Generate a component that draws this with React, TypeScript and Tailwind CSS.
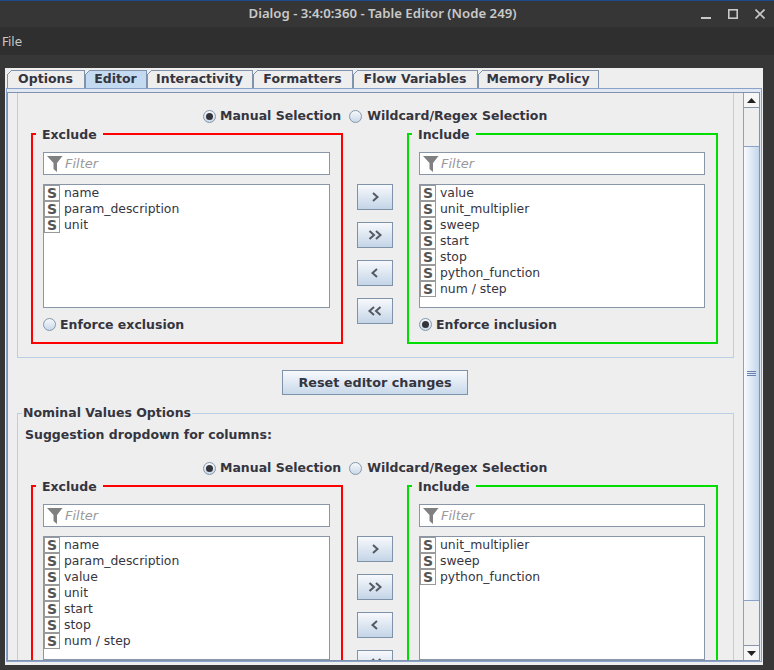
import React from 'react';

const bold = "font-['DejaVu_Sans',sans-serif] font-bold text-[12.5px] text-[#35353f]";

const tabs = [
  { name: 'Options', width: 'w-[78px]' },
  { name: 'Editor', width: 'w-[62px]', active: true },
  { name: 'Interactivity', width: 'w-[106px]' },
  { name: 'Formatters', width: 'w-[100px]' },
  { name: 'Flow Variables', width: 'w-[125px]' },
  { name: 'Memory Policy', width: 'w-[121px]' },
];

const Radio = ({ checked = false }: { checked?: boolean }) => (
  <span className="w-[13px] h-[13px] shrink-0 rounded-full border border-[#8397ac] bg-linear-to-b from-[#f6f8fb] to-[#c9d8e8] flex items-center justify-center">
    {checked && <span className="w-[7px] h-[7px] rounded-full bg-[#33333a]" />}
  </span>
);

const Funnel = () => (
  <svg width="16" height="18" viewBox="0 0 16 18" className="shrink-0">
    <path d="M0 1 H15.5 L10 8 V17 L6.5 14 V8 Z" fill="#808080" />
  </svg>
);

const FilterBox = ({ width }: { width: string }) => (
  <div className={`${width} h-[23px] bg-white border border-[#8896a8] flex items-center pl-[3px] gap-[2px]`}>
    <Funnel />
    <span className="font-['DejaVu_Sans',sans-serif] italic text-[13px] text-[#999999]">Filter</span>
  </div>
);

const ColumnList = ({ items, width }: { items: string[]; width: string }) => (
  <div className={`${width} h-[124px] bg-white border border-[#8896a8]`}>
    {items.map((item) => (
      <div key={item} className="h-[16px] flex items-center">
        <span className="w-[16px] h-[16px] shrink-0 border border-[#9a9a9a] flex items-center justify-center font-['DejaVu_Sans',sans-serif] font-bold text-[14px] text-[#555555]">
          S
        </span>
        <span className="ml-[4px] font-['DejaVu_Sans',sans-serif] text-[12.4px] text-[#35353f] whitespace-nowrap">{item}</span>
      </div>
    ))}
  </div>
);

const ColumnBox = ({
  title,
  color,
  items,
  enforce,
  checked,
  outer,
  inner,
}: {
  title: string;
  color: string;
  items: string[];
  enforce?: string;
  checked?: boolean;
  outer: string;
  inner: string;
}) => (
  <fieldset className={`${outer} h-[218px] border-2 ${color} pl-[10px] shrink-0`}>
    <legend className={`-ml-[7px] px-[6px] h-[16px] leading-[18px] ${bold}`}>{title}</legend>
    <div className="mt-[10px]">
      <FilterBox width={inner} />
    </div>
    <div className="mt-[9px]">
      <ColumnList items={items} width={inner} />
    </div>
    {enforce && (
      <div className="mt-[8px] h-[16px] flex items-center gap-[4px]">
        <Radio checked={checked} />
        <span className={`pt-[2px] ${bold}`}>{enforce}</span>
      </div>
    )}
  </fieldset>
);

const Chevrons = ({ dir, double }: { dir: 'left' | 'right'; double?: boolean }) => {
  const paths =
    dir === 'right'
      ? double
        ? ['M2.5 3 L7 7 L2.5 11', 'M9 3 L13.5 7 L9 11']
        : ['M6 3 L10.5 7 L6 11']
      : double
        ? ['M7 3 L2.5 7 L7 11', 'M13.5 3 L9 7 L13.5 11']
        : ['M10 3 L5.5 7 L10 11'];
  return (
    <svg width="16" height="14" viewBox="0 0 16 14" fill="none" stroke="#555a62" strokeWidth="2">
      {paths.map((d) => (
        <path key={d} d={d} />
      ))}
    </svg>
  );
};

const MoveButton = ({ dir, double }: { dir: 'left' | 'right'; double?: boolean }) => (
  <button className="w-[36px] h-[26px] border border-[#7e93aa] bg-linear-to-b from-[#f7f9fc] to-[#c4d5e7] flex items-center justify-center">
    <Chevrons dir={dir} double={double} />
  </button>
);

const SelectionRow = () => (
  <div className="h-[16px] flex items-center pl-[185px]">
    <Radio checked />
    <span className={`ml-[4px] ${bold}`}>Manual Selection</span>
    <span className="ml-[8px]">
      <Radio />
    </span>
    <span className={`ml-[5px] ${bold}`}>Wildcard/Regex Selection</span>
  </div>
);

const ColumnFilter = ({
  exclude,
  include,
  enforce,
  checkInclude,
}: {
  exclude: string[];
  include: string[];
  enforce?: boolean;
  checkInclude?: boolean;
}) => (
  <div className="flex items-start ml-[13px] mt-[2px]">
    <ColumnBox
      title="Exclude"
      color="border-[#ff0000]"
      items={exclude}
      enforce={enforce ? 'Enforce exclusion' : undefined}
      outer="w-[312px]"
      inner="w-[287px]"
    />
    <div className="w-[64px] shrink-0 flex flex-col items-center gap-[12px] mt-[58px]">
      <MoveButton dir="right" />
      <MoveButton dir="right" double />
      <MoveButton dir="left" />
      <MoveButton dir="left" double />
    </div>
    <ColumnBox
      title="Include"
      color="border-[#00dd00]"
      items={include}
      enforce={enforce ? 'Enforce inclusion' : undefined}
      checked={checkInclude}
      outer="w-[311px]"
      inner="w-[286px]"
    />
  </div>
);

const Scrollbar = () => (
  <div className="w-[16px] shrink-0 flex flex-col bg-[#eeeeee] border-l border-[#8aa2c8]">
    <div className="h-[15px] shrink-0 border-b border-[#8896a8] bg-[#f6f6f6] flex items-center justify-center">
      <svg width="9" height="5" viewBox="0 0 9 5"><path d="M0 5 L4.5 0 L9 5 Z" fill="#222222" /></svg>
    </div>
    <div className="h-[38px] shrink-0" />
    <div className="flex-1 border-y border-[#8aa2c8] bg-linear-to-r from-[#f8fbfe] to-[#c3d6e9] flex flex-col items-center justify-center gap-[1px]">
      <span className="w-[9px] h-[1px] bg-[#6a80b0]" />
      <span className="w-[9px] h-[1px] bg-[#6a80b0]" />
      <span className="w-[9px] h-[1px] bg-[#6a80b0]" />
    </div>
    <div className="h-[44px] shrink-0" />
    <div className="h-[15px] shrink-0 border-t border-[#8896a8] bg-[#f6f6f6] flex items-center justify-center">
      <svg width="9" height="5" viewBox="0 0 9 5"><path d="M0 0 L4.5 5 L9 0 Z" fill="#222222" /></svg>
    </div>
  </div>
);

export default function App() {
  return (
    <div className="w-[774px] h-[670px] overflow-hidden flex flex-col bg-[#373737]">
      {/* title bar */}
      <div className="h-[27px] shrink-0 border-t border-[#1c4a8c] bg-[#363636] flex items-center">
        <div className="flex-1" />
        <span className="font-['Noto_Sans',sans-serif] font-semibold text-[13.2px] text-[#c9c9c9] whitespace-nowrap">
          Dialog - 3:4:0:360 - Table Editor (Node 249)
        </span>
        <div className="flex-1 flex justify-end items-center gap-[17px] pr-[9px]">
          <svg width="10" height="10" viewBox="0 0 10 10"><rect x="0" y="8" width="10" height="2" fill="#c9c9c9" /></svg>
          <svg width="10" height="10" viewBox="0 0 10 10" fill="none" stroke="#c9c9c9" strokeWidth="1.6"><rect x="0.8" y="0.8" width="8.4" height="8.4" /></svg>
          <svg width="10" height="10" viewBox="0 0 10 10" fill="none" stroke="#c9c9c9" strokeWidth="1.6"><path d="M0.5 0.5 L9.5 9.5 M9.5 0.5 L0.5 9.5" /></svg>
        </div>
      </div>

      {/* menu bar */}
      <div className="h-[28px] shrink-0 bg-[#2f2f2f] flex items-center pl-[2px] pt-[1px]">
        <span className="font-['DejaVu_Sans',sans-serif] text-[12px] text-[#c9c9c9]">File</span>
      </div>

      {/* dialog */}
      <div className="w-[758px] h-[597px] mt-[13px] ml-[5px] bg-[#eeeeee] flex flex-col pt-[2px]">
        <div className="h-[18px] shrink-0 flex pl-[2px]">
          {tabs.map((tab) => (
            <div
              key={tab.name}
              className={`${tab.width} relative shrink-0 border border-b-0 border-[#8093ad] flex items-center justify-center pr-[1px] ${bold} ${
                tab.active ? 'bg-[#c4daf0]' : 'bg-[#eeeeee]'
              }`}
            >
              <svg width="5" height="5" viewBox="0 0 5 5" className="absolute -left-[1px] -top-[1px]">
                <path d="M0 0 H5 L0 5 Z" fill="#eeeeee" />
                <path d="M5 0 L0 5" stroke="#8093ad" strokeWidth="1" />
              </svg>
              {tab.name}
            </div>
          ))}
        </div>

        <div className="flex-1 min-h-0 mx-[1px] mb-[3px] border border-[#8aa2c8] bg-[#dfe8f3] pt-[3px] pr-[1px] flex flex-col">
          <div className="flex-1 min-h-0 border border-[#8093ad] bg-[#eeeeee] flex">
            <div className="flex-1 min-w-0 overflow-hidden px-[9px]">
              {/* editor columns */}
              <div className="h-[265px] border-x border-b border-[#b8cfe5] pt-[15px]">
                <SelectionRow />
                <ColumnFilter
                  exclude={['name', 'param_description', 'unit']}
                  include={['value', 'unit_multiplier', 'sweep', 'start', 'stop', 'python_function', 'num / step']}
                  enforce
                  checkInclude
                />
              </div>

              <div className="mt-[12px] flex justify-center pr-[1px]">
                <button className={`w-[186px] h-[25px] border border-[#7e93aa] bg-linear-to-b from-[#f7f9fc] to-[#c9d9ea] ${bold} text-[12.8px]`}>
                  Reset editor changes
                </button>
              </div>

              {/* nominal values */}
              <fieldset className="mt-[10px] border border-[#b8cfe5] h-[400px]">
                <legend className={`ml-[4px] px-[1px] h-[16px] leading-[16px] ${bold}`}>Nominal Values Options</legend>
                <div className={`mt-[6px] ml-[7px] h-[16px] leading-[16px] ${bold}`}>Suggestion dropdown for columns:</div>
                <div className="mt-[17px]">
                  <SelectionRow />
                </div>
                <ColumnFilter
                  exclude={['name', 'param_description', 'value', 'unit', 'start', 'stop', 'num / step']}
                  include={['unit_multiplier', 'sweep', 'python_function']}
                />
              </fieldset>
            </div>
            <Scrollbar />
          </div>
        </div>
      </div>
    </div>
  );
}
